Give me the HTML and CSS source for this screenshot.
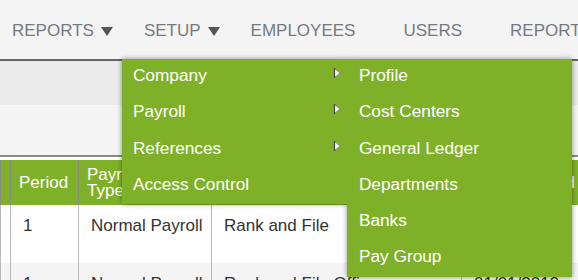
FILE: index.html
```html
<!DOCTYPE html>
<html lang="en">
<head>
    <meta charset="UTF-8">
    <title>Payroll Setup</title>
    <link rel="stylesheet" href="styles.css">
</head>
<body>
    <header class="topbar">
        <ul class="nav">
            <li class="nav-item has-caret">REPORTS<svg class="caret" width="12" height="9" viewBox="0 0 12 9"><polygon points="0,0 12,0 6,9"/></svg></li>
            <li class="nav-item has-caret setup">SETUP<svg class="caret" width="12" height="9" viewBox="0 0 12 9"><polygon points="0,0 12,0 6,9"/></svg>
                <ul class="dropdown">
                    <li class="has-sub">Company<svg class="sub-arrow" width="8" height="12" viewBox="0 0 8 12"><polygon points="1.5,1.5 7,6 1.5,10.5"/><line x1="1.5" y1="1" x2="1.5" y2="11"/></svg></li>
                    <li class="has-sub">Payroll<svg class="sub-arrow" width="8" height="12" viewBox="0 0 8 12"><polygon points="1.5,1.5 7,6 1.5,10.5"/><line x1="1.5" y1="1" x2="1.5" y2="11"/></svg></li>
                    <li class="has-sub">References<svg class="sub-arrow" width="8" height="12" viewBox="0 0 8 12"><polygon points="1.5,1.5 7,6 1.5,10.5"/><line x1="1.5" y1="1" x2="1.5" y2="11"/></svg></li>
                    <li>Access Control</li>

                    <!-- Company submenu (open) -->
                    <ul class="submenu">
                        <li>Profile</li>
                        <li>Cost Centers</li>
                        <li>General Ledger</li>
                        <li>Departments</li>
                        <li>Banks</li>
                        <li>Pay Group</li>
                    </ul>
                </ul>
            </li>
            <li class="nav-item">EMPLOYEES</li>
            <li class="nav-item">USERS</li>
            <li class="nav-item">REPORTS</li>
        </ul>
    </header>

    <main class="content">
        <div class="toolbar">
            <div class="toolbar-top"></div>
            <div class="toolbar-bottom"></div>
        </div>

        <table class="grid">
            <colgroup>
                <col style="width: 10px">
                <col style="width: 68px">
                <col style="width: 133px">
                <col style="width: 250px">
                <col style="width: 200px">
            </colgroup>
            <thead>
                <tr>
                    <th></th>
                    <th>Period</th>
                    <th>Payroll<br>Type</th>
                    <th>Employee Group</th>
                    <th>Date Covered</th>
                </tr>
            </thead>
            <tbody>
                <tr>
                    <td></td>
                    <td>1</td>
                    <td>Normal Payroll</td>
                    <td>Rank and File</td>
                    <td>01/01/2019</td>
                </tr>
                <tr>
                    <td></td>
                    <td>1</td>
                    <td>Normal Payroll</td>
                    <td>Rank and File Officers</td>
                    <td>01/01/2019</td>
                </tr>
            </tbody>
        </table>
    </main>
</body>
</html>
```

FILE: styles.css
```css
/* General */
* {
    margin: 0;
    padding: 0;
    box-sizing: border-box;
}

body {
    font-family: "Liberation Sans", Arial, sans-serif;
    background-color: #fff;
    width: 578px;
    height: 280px;
    overflow: hidden;
}

/* Top navigation */
.topbar {
    background-color: #f4f4f4;
    height: 59px;
}

.nav {
    list-style: none;
    display: flex;
    padding-left: 12px;
    white-space: nowrap;
}

.nav-item {
    position: relative;
    height: 59px;
    padding-top: 21px;
    padding-right: 48px;
    font-size: 17px;
    line-height: 20px;
    color: #757a80;
}

.nav-item.has-caret {
    padding-right: 31px;
}

.caret {
    margin-left: 7px;
    fill: #555;
}

/* Dropdown menu */
.dropdown {
    position: absolute;
    top: 100%;
    left: -22px;
    z-index: 10;
    width: 225px;
    list-style: none;
    background-color: #7fb128;
    box-shadow: 0 0 5px rgba(0, 0, 0, 0.45);
}

.dropdown li {
    position: relative;
    padding: 6px 11px 10px;
    line-height: 20.3px;
    font-size: 17.3px;
    color: #fff;
    background-color: #7fb128;
}

.sub-arrow {
    position: absolute;
    right: 6px;
    top: 8px;
    fill: #fff;
    stroke: #8a8a8a;
    stroke-width: 1;
}

.sub-arrow line {
    stroke: #444;
    stroke-width: 1.2;
}

.submenu {
    position: absolute;
    top: 0;
    left: 100%;
    z-index: -1;
    width: 225px;
    list-style: none;
    background-color: #7fb128;
    box-shadow: 0 0 5px rgba(0, 0, 0, 0.45);
}

.submenu li {
    padding-left: 12px;
}

/* Toolbar panel */
.content {
    border-top: 2px solid #666;
}

.toolbar {
    border-bottom: 2px solid #8a8a8a;
}

.toolbar-top {
    height: 44px;
    background-color: #ebebeb;
}

.toolbar-bottom {
    height: 50px;
    background-color: #f5f5f5;
}

/* Table */
.grid {
    width: 661px;
    table-layout: fixed;
    border-collapse: collapse;
    margin-top: 3px;
    font-size: 17px;
}

.grid th {
    height: 45px;
    padding: 0 8px;
    background-color: #7fb128;
    color: #fff;
    font-weight: normal;
    text-align: left;
    line-height: 16px;
    border-left: 1px solid #8a8a8a;
}

.grid td {
    height: 58px;
    padding: 11px 12px;
    vertical-align: top;
    line-height: 20px;
    color: #333;
    border-left: 1px solid #b8b8b8;
    white-space: nowrap;
}

.grid tbody tr:nth-child(even) td {
    background-color: #f4f4f4;
}
```
